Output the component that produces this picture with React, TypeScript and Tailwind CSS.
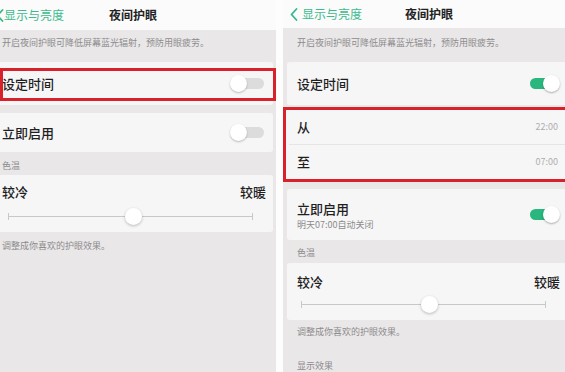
import React from 'react';

const font = { fontFamily: '"Noto Sans CJK SC", "Noto Sans", sans-serif' };

function Chevron() {
  return (
    <svg width="8" height="13" viewBox="0 0 8 13" className="shrink-0">
      <path d="M6.5 1 L1.5 6.5 L6.5 12" fill="none" stroke="#33b98a" strokeWidth="1.8" strokeLinecap="round" strokeLinejoin="round" />
    </svg>
  );
}

function Toggle({ on }: { on: boolean }) {
  if (on) {
    return (
      <div className="relative w-[30px] h-[17px] shrink-0">
        <div className="absolute left-0 top-[3px] w-[26px] h-[11px] rounded-full bg-[#29b67f]" />
        <div className="absolute right-0 top-0 w-[17px] h-[17px] rounded-full bg-white shadow-[0_1px_2px_rgba(0,0,0,0.3)]" />
      </div>
    );
  }
  return (
    <div className="relative w-[34px] h-[17px] shrink-0">
      <div className="absolute right-0 top-[3px] w-[30px] h-[11px] rounded-full bg-[#dddcdd]" />
      <div className="absolute left-0 top-0 w-[17px] h-[17px] rounded-full bg-white shadow-[0_1px_2px_rgba(0,0,0,0.25)]" />
    </div>
  );
}

function Slider({ width, pos }: { width: number; pos: number }) {
  return (
    <div className="relative h-[17px]" style={{ width }}>
      <div className="absolute left-0 right-0 top-[8px] h-px bg-[#c9c8c9]" />
      <div className="absolute left-0 top-[5px] w-px h-[7px] bg-[#c9c8c9]" />
      <div className="absolute right-0 top-[5px] w-px h-[7px] bg-[#c9c8c9]" />
      <div
        className="absolute top-0 w-[17px] h-[17px] -ml-[8px] rounded-full bg-white shadow-[0_1px_3px_rgba(0,0,0,0.25)]"
        style={{ left: pos }}
      />
    </div>
  );
}

const small = 'text-[9px] leading-[10px] text-[#8d8b8c]';
const label = 'text-[13px] leading-[14px] font-medium text-[#1f1f1f]';

function LeftPanel() {
  return (
    <div className="w-[276px] h-full bg-[#e9e7e8] flex flex-col overflow-hidden shrink-0">
      <div className="h-[30px] bg-[#fbfbfb] flex items-center shrink-0 -ml-[4px]">
        <Chevron />
        <span className="text-[12px] text-[#3dbb8e]">显示与亮度</span>
        <span className="ml-[45px] text-[12px] font-bold text-[#222]">夜间护眼</span>
      </div>
      <div className={`h-[26px] flex items-center pl-[2px] ${small}`}>开启夜间护眼可降低屏幕蓝光辐射，预防用眼疲劳。</div>
      <div className="relative mt-[6px] w-[273px] h-[43px] bg-[#f7f6f7] rounded-r-[3px] flex items-center justify-between pl-[2px] pr-[9px]">
        <span className={label}>设定时间</span>
        <Toggle on={false} />
        <div className="absolute left-0 -right-[3px] top-[6px] h-[33px] border-[3px] border-[#d8222b]" />
      </div>
      <div className="mt-[8px] w-[273px] h-[39px] bg-[#f7f6f7] rounded-r-[3px] flex items-center justify-between pl-[2px] pr-[9px]">
        <span className={label}>立即启用</span>
        <Toggle on={false} />
      </div>
      <div className={`h-[23px] flex items-end pb-[4px] pl-[2px] ${small}`}>色温</div>
      <div className="w-[273px] h-[57px] bg-[#f7f6f7] rounded-r-[3px] pt-[10px] pl-[2px] pr-[7px]">
        <div className={`flex justify-between ${label}`}>
          <span>较冷</span>
          <span>较暖</span>
        </div>
        <div className="mt-[9px] ml-[6px]">
          <Slider width={245} pos={125} />
        </div>
      </div>
      <div className={`pt-[9px] pl-[2px] ${small}`}>调整成你喜欢的护眼效果。</div>
    </div>
  );
}

function RightPanel() {
  return (
    <div className="flex-1 h-full bg-[#e9e7e8] overflow-hidden">
      <div className="w-[290px] flex flex-col">
        <div className="h-[28px] bg-[#fbfbfb] flex items-center pl-[7px] shrink-0">
          <Chevron />
          <span className="ml-[4px] text-[12px] text-[#3dbb8e]">显示与亮度</span>
          <span className="ml-[43px] text-[12px] font-bold text-[#222]">夜间护眼</span>
        </div>
        <div className={`h-[30px] flex items-center pl-[14px] ${small}`}>开启夜间护眼可降低屏幕蓝光辐射，预防用眼疲劳。</div>
        <div className="mt-[4px] ml-[4px] h-[43px] bg-[#f7f6f7] rounded-l-[3px] flex items-center justify-between pl-[10px] pr-[13px]">
          <span className={label}>设定时间</span>
          <Toggle on />
        </div>
        <div className="mt-[2px] border-[3px] border-[#d8222b] bg-[#f7f6f7]">
          <div className="h-[34px] flex items-center justify-between pl-[11px] pr-[12px]">
            <span className={label}>从</span>
            <span className="text-[9px] text-[#aeadae]">22:00</span>
          </div>
          <div className="h-px ml-[3px] bg-[#e6e5e6]" />
          <div className="h-[34px] flex items-center justify-between pl-[11px] pr-[12px]">
            <span className={label}>至</span>
            <span className="text-[9px] text-[#aeadae]">07:00</span>
          </div>
        </div>
        <div className="mt-[7px] ml-[4px] h-[51px] bg-[#f7f6f7] rounded-l-[3px] flex items-center justify-between pl-[10px] pr-[13px]">
          <div className="flex flex-col gap-[4px] pt-[2px]">
            <span className={label}>立即启用</span>
            <span className={small}>明天07:00自动关闭</span>
          </div>
          <Toggle on />
        </div>
        <div className={`h-[23px] flex items-end pb-[5px] pl-[14px] ${small}`}>色温</div>
        <div className="ml-[4px] h-[57px] bg-[#f7f6f7] rounded-l-[3px] pt-[12px] pl-[10px] pr-[13px]">
          <div className={`flex justify-between ${label}`}>
            <span>较冷</span>
            <span>较暖</span>
          </div>
          <div className="mt-[7px] ml-[4px]">
            <Slider width={245} pos={128} />
          </div>
        </div>
        <div className={`pt-[7px] pl-[14px] ${small}`}>调整成你喜欢的护眼效果。</div>
        <div className={`pt-[24px] pl-[14px] ${small}`}>显示效果</div>
      </div>
    </div>
  );
}

export default function App() {
  return (
    <div className="w-[565px] h-[372px] flex bg-white overflow-hidden" style={font}>
      <LeftPanel />
      <div className="w-[7px] h-full bg-[#fdfdfd] shrink-0" />
      <RightPanel />
    </div>
  );
}
